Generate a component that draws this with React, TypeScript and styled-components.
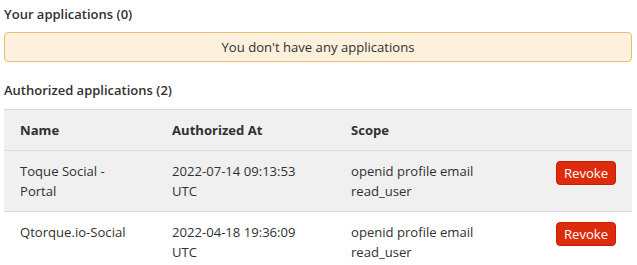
import styled, { createGlobalStyle } from "styled-components";

const GlobalStyle = createGlobalStyle`
  body {
    margin: 0;
    background: #fff;
    font-family: "Open Sans", "Noto Sans", sans-serif;
    font-size: 13.1px;
    color: #303030;
  }
`;

type AuthorizedApp = {
  name: string;
  authorizedAt: string;
  scope: string;
};

const authorizedApps: AuthorizedApp[] = [
  {
    name: "Toque Social - Portal",
    authorizedAt: "2022-07-14 09:13:53 UTC",
    scope: "openid profile email read_user",
  },
  {
    name: "Qtorque.io-Social",
    authorizedAt: "2022-04-18 19:36:09 UTC",
    scope: "openid profile email read_user",
  },
];

const Page = styled.div`
  padding: 4px 5px 0 4px;
`;

const SectionTitle = styled.h5<{ $spaced?: boolean }>`
  margin: ${(p) => (p.$spaced ? "18px" : "0")} 0 0;
  font-size: 13px;
  line-height: 20px;
  font-weight: 600;
  color: #303030;
`;

const Alert = styled.div`
  margin-top: 8px;
  padding: 4px 16px;
  line-height: 20px;
  text-align: center;
  background: #fdf1dd;
  border: 1px solid #e9be74;
  border-radius: 4px;
`;

const Table = styled.table`
  margin-top: 9px;
  width: 100%;
  border-collapse: collapse;
  table-layout: fixed;
  border-top: 1px solid #dbdbdb;
`;

const HeadCell = styled.th<{ $width: number }>`
  box-sizing: border-box;
  width: ${(p) => p.$width}px;
  padding: 10px 16px;
  line-height: 20px;
  text-align: left;
  font-weight: 700;
  background: #f0f0f0;
  border-bottom: 1px solid #dbdbdb;
`;

const Row = styled.tr<{ $striped: boolean }>`
  background: ${(p) => (p.$striped ? "#f0f0f0" : "#fff")};
  border-bottom: 1px solid #dbdbdb;
  &:last-child {
    border-bottom: none;
  }
`;

const Cell = styled.td`
  box-sizing: border-box;
  padding: 10px 16px;
  line-height: 20px;
  vertical-align: top;
  text-align: left;
`;

const RevokeButton = styled.button`
  height: 24px;
  padding: 0 7px;
  font-family: inherit;
  font-size: 13.1px;
  line-height: 22px;
  color: #fff;
  background: #dd2b0e;
  border: 1px solid #c91c00;
  border-radius: 4px;
  cursor: pointer;
`;

function App() {
  return (
    <>
      <GlobalStyle />
      <Page>
        <SectionTitle>Your applications (0)</SectionTitle>
        <Alert>You don't have any applications</Alert>

        <SectionTitle $spaced>
          Authorized applications ({authorizedApps.length})
        </SectionTitle>
        <Table>
          <thead>
            <tr>
              <HeadCell $width={152}>Name</HeadCell>
              <HeadCell $width={179}>Authorized At</HeadCell>
              <HeadCell $width={205}>Scope</HeadCell>
              <HeadCell $width={92}></HeadCell>
            </tr>
          </thead>
          <tbody>
            {authorizedApps.map((app, i) => (
              <Row key={app.name} $striped={i % 2 === 0}>
                <Cell>{app.name}</Cell>
                <Cell>{app.authorizedAt}</Cell>
                <Cell>{app.scope}</Cell>
                <Cell>
                  <RevokeButton>Revoke</RevokeButton>
                </Cell>
              </Row>
            ))}
          </tbody>
        </Table>
      </Page>
    </>
  );
}

export default App;
